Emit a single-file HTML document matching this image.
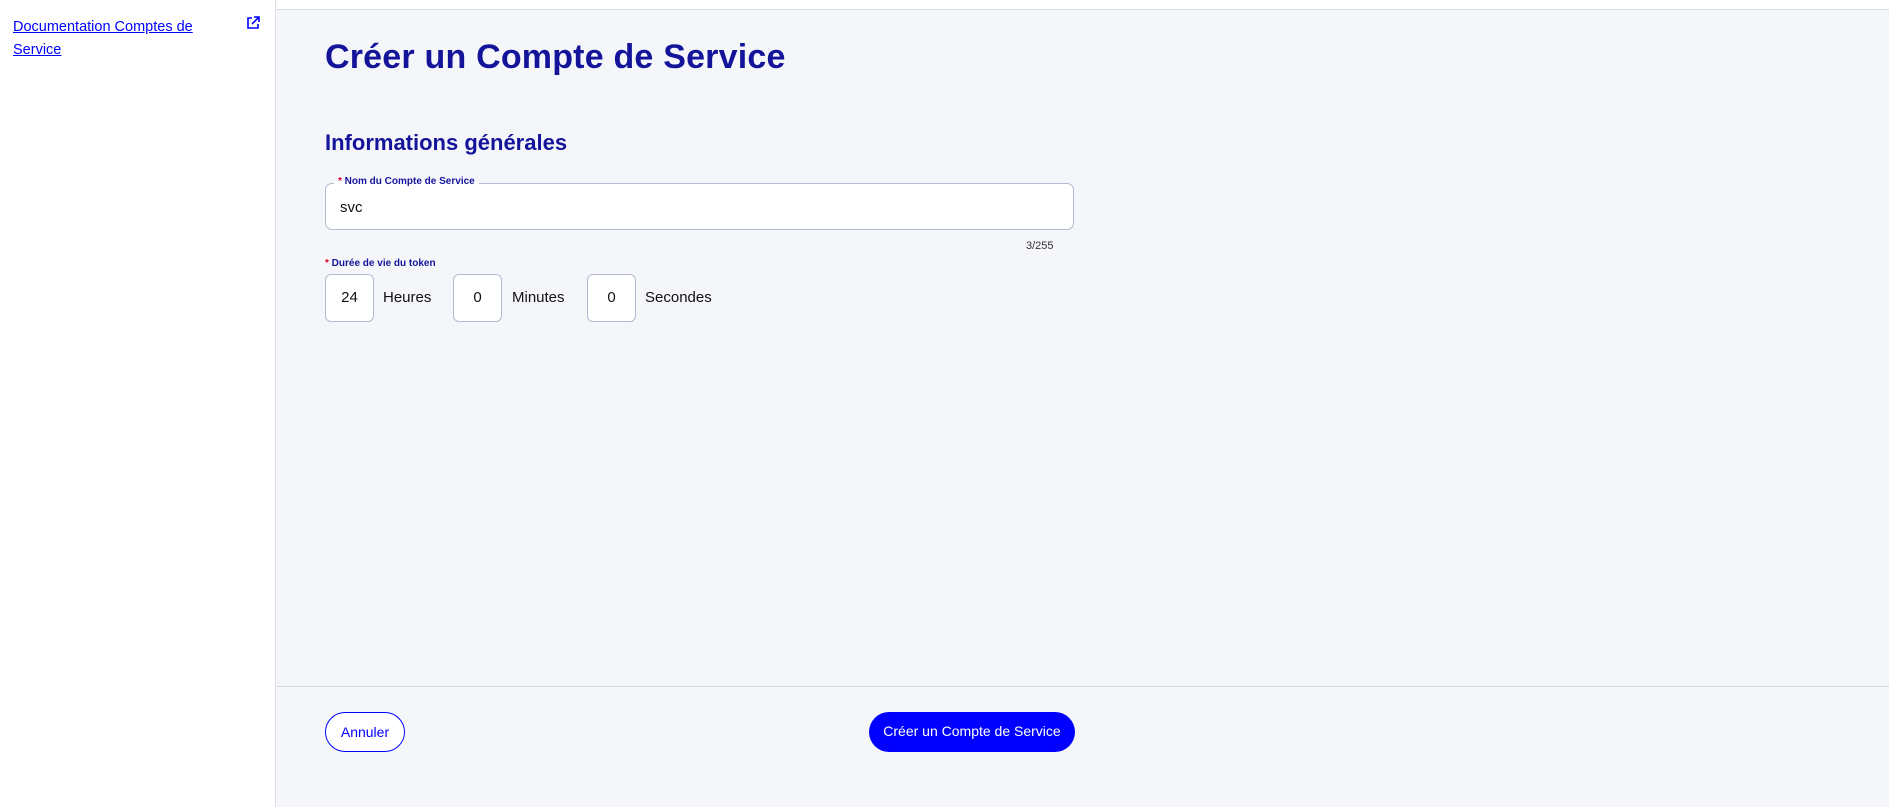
<!DOCTYPE html>
<html><head><meta charset="utf-8"><style>
*{box-sizing:border-box;margin:0;padding:0}
body{width:1889px;height:807px;overflow:hidden;background:#f5f6fa;font-family:"Liberation Sans",sans-serif;position:relative}
.side{position:absolute;left:0;top:0;width:276px;height:807px;background:#fff;border-right:1px solid #dcdfe8}
.side a{position:absolute;left:13px;top:16px;width:200px;font-size:14.5px;line-height:23px;color:#0000ff;text-decoration:underline}
.top{position:absolute;left:277px;top:0;right:0;height:10px;background:#fff;border-bottom:1px solid #d5d8e6}
h1{position:absolute;left:325px;top:38px;font-size:34px;font-weight:bold;color:#14149a;letter-spacing:0.2px}
h2{position:absolute;left:325px;top:130px;font-size:22px;font-weight:bold;color:#14149a}
.inp{position:absolute;left:325px;top:183px;width:749px;height:47px;background:#fff;border:1px solid #b3bad3;border-radius:7px}
.lab{position:absolute;left:8px;top:-8px;background:linear-gradient(#f5f6fa 50%,#fff 50%);padding:0 4px;font-size:10px;font-weight:bold;color:#14149a}
.r{color:#e0002a}
.val{position:absolute;left:14px;top:15px;font-size:15px;color:#111}
.cnt{position:absolute;left:1026px;top:240px;font-size:11px;color:#333}
.lab2{position:absolute;left:325px;top:258px;font-size:10px;font-weight:bold;color:#14149a}
.box{position:absolute;top:274px;width:49px;height:48px;background:#fff;border:1px solid #b3bad3;border-radius:6px;font-size:15px;text-align:center;line-height:46px;color:#111}
.u{position:absolute;top:289px;font-size:15px;color:#111}
.foot{position:absolute;left:277px;top:686px;right:0;border-top:1px solid #d5d8e6}
.btn{position:absolute;top:712px;height:40px;border-radius:20px;font-size:14px;line-height:38px;text-align:center}
</style></head><body>
<div class="side"><a>Documentation Comptes de Service</a>
<svg style="position:absolute;left:246px;top:16px" width="14" height="14" viewBox="0 0 14 14" fill="none" stroke="#0000ff" stroke-width="1.6"><path d="M6 2H2v10h10V8"/><path d="M8 1h5v5M13 1L6 8"/></svg></div>
<div class="top"></div>
<h1>Créer un Compte de Service</h1>
<h2>Informations générales</h2>
<div class="inp"><span class="lab"><span class="r">*</span> Nom du Compte de Service</span><span class="val">svc</span></div>
<div class="cnt">3/255</div>
<div class="lab2"><span class="r">*</span> Durée de vie du token</div>
<div class="box" style="left:325px">24</div><div class="u" style="left:383px">Heures</div>
<div class="box" style="left:453px">0</div><div class="u" style="left:512px">Minutes</div>
<div class="box" style="left:587px">0</div><div class="u" style="left:645px">Secondes</div>
<div class="foot"></div>
<div class="btn" style="left:325px;width:80px;border:1px solid #0000ff;color:#0000ff;background:#fff">Annuler</div>
<div class="btn" style="left:869px;width:206px;background:#0000ff;color:#fff">Créer un Compte de Service</div>
</body></html>
